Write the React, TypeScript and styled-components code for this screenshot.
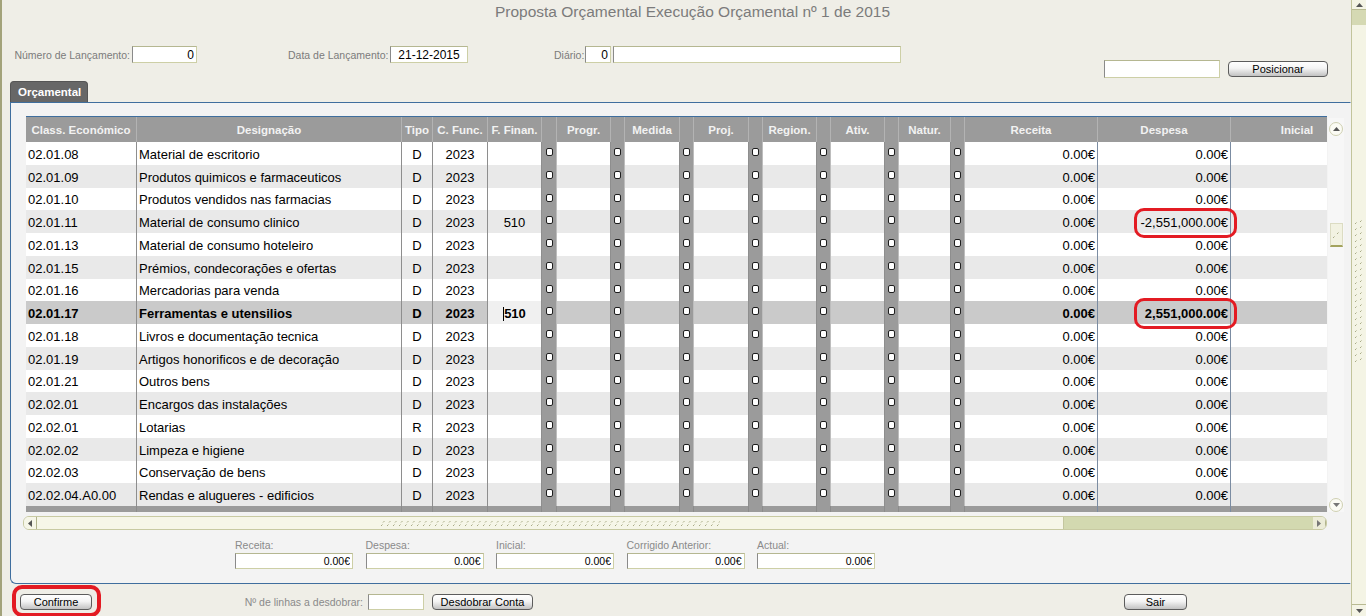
import React from "react";
import styled, { createGlobalStyle } from "styled-components";

const GlobalStyle = createGlobalStyle`
  html, body { margin: 0; padding: 0; background: #efeee7; }
  body { font-family: "Liberation Sans", Arial, sans-serif; }
  * { box-sizing: border-box; }
`;

type Kind = "text" | "check" | "money";
type Align = "left" | "center" | "right";
interface Col { key: string; label: string; w: number; kind: Kind; align: Align; }

const COLS: Col[] = [
  { key: "cls", label: "Class. Económico", w: 111, kind: "text", align: "left" },
  { key: "des", label: "Designação", w: 265, kind: "text", align: "left" },
  { key: "tipo", label: "Tipo", w: 31, kind: "text", align: "center" },
  { key: "cf", label: "C. Func.", w: 55, kind: "text", align: "center" },
  { key: "ff", label: "F. Finan.", w: 54, kind: "text", align: "center" },
  { key: "c1", label: "", w: 15, kind: "check", align: "center" },
  { key: "progr", label: "Progr.", w: 54, kind: "text", align: "center" },
  { key: "c2", label: "", w: 14, kind: "check", align: "center" },
  { key: "medida", label: "Medida", w: 55, kind: "text", align: "center" },
  { key: "c3", label: "", w: 14, kind: "check", align: "center" },
  { key: "proj", label: "Proj.", w: 55, kind: "text", align: "center" },
  { key: "c4", label: "", w: 14, kind: "check", align: "center" },
  { key: "region", label: "Region.", w: 54, kind: "text", align: "center" },
  { key: "c5", label: "", w: 14, kind: "check", align: "center" },
  { key: "ativ", label: "Ativ.", w: 54, kind: "text", align: "center" },
  { key: "c6", label: "", w: 14, kind: "check", align: "center" },
  { key: "natur", label: "Natur.", w: 52, kind: "text", align: "center" },
  { key: "c7", label: "", w: 14, kind: "check", align: "center" },
  { key: "receita", label: "Receita", w: 133, kind: "money", align: "right" },
  { key: "despesa", label: "Despesa", w: 133, kind: "money", align: "right" },
  { key: "inicial", label: "Inicial", w: 133, kind: "money", align: "right" },
];

const TEMPLATE = COLS.map((c) => `${c.w}px`).join(" ");

interface RowData {
  cls: string; des: string; tipo: string; ff?: string; despesa?: string; ring?: boolean; sel?: boolean;
}

const ROWS: RowData[] = [
  { cls: "02.01.08", des: "Material de escritorio", tipo: "D" },
  { cls: "02.01.09", des: "Produtos quimicos e farmaceuticos", tipo: "D" },
  { cls: "02.01.10", des: "Produtos vendidos nas farmacias", tipo: "D" },
  { cls: "02.01.11", des: "Material de consumo clinico", tipo: "D", ff: "510", despesa: "-2,551,000.00€", ring: true },
  { cls: "02.01.13", des: "Material de consumo hoteleiro", tipo: "D" },
  { cls: "02.01.15", des: "Prémios, condecorações e ofertas", tipo: "D" },
  { cls: "02.01.16", des: "Mercadorias para venda", tipo: "D" },
  { cls: "02.01.17", des: "Ferramentas e utensilios", tipo: "D", ff: "510", despesa: "2,551,000.00€", ring: true, sel: true },
  { cls: "02.01.18", des: "Livros e documentação tecnica", tipo: "D" },
  { cls: "02.01.19", des: "Artigos honorificos e de decoração", tipo: "D" },
  { cls: "02.01.21", des: "Outros bens", tipo: "D" },
  { cls: "02.02.01", des: "Encargos das instalações", tipo: "D" },
  { cls: "02.02.01", des: "Lotarias", tipo: "R" },
  { cls: "02.02.02", des: "Limpeza e higiene", tipo: "D" },
  { cls: "02.02.03", des: "Conservação de bens", tipo: "D" },
  { cls: "02.02.04.A0.00", des: "Rendas e alugueres - edificios", tipo: "D" },
];

/* ---------- page frame ---------- */
const Page = styled.div`
  width: 1366px;
  height: 616px;
  overflow: hidden;
  display: grid;
  grid-template-columns: 1351px 15px;
  background: #efeee7;
`;

const Main = styled.div`
  border-left: 2px solid #a3a37b;
  display: flex;
  flex-direction: column;
  min-width: 0;
`;

const Title = styled.h1`
  margin: 0;
  padding-left: 32px;
  height: 24px;
  line-height: 24px;
  font-size: 15.5px;
  font-weight: normal;
  color: #7b7b7b;
  text-align: center;
`;

/* ---------- header fields ---------- */
const HeaderRow = styled.div`
  display: flex;
  justify-content: space-between;
  align-items: flex-start;
  margin-top: 22px;
  padding: 0 23px 0 12px;
  height: 32px;
`;

const FieldLine = styled.div`
  display: flex;
  align-items: center;
  height: 17px;
`;

const FieldGroup = styled.div<{ $offset: number }>`
  display: flex;
  align-items: center;
  gap: 2px;
  margin-left: ${(p) => p.$offset}px;
`;

const FieldLabel = styled.label<{ $w: number }>`
  width: ${(p) => p.$w}px;
  text-align: right;
  font-size: 10.5px;
  color: #7b7b7b;
  white-space: nowrap;
`;

const TextBox = styled.input<{ $w: number; $h?: number; $align?: Align; $size?: number }>`
  width: ${(p) => p.$w}px;
  height: ${(p) => p.$h ?? 17}px;
  margin: 0;
  padding: 0 2px;
  background: #ffffff;
  border: 1px solid #cdcfa6;
  border-left-color: #8a8a8a;
  border-top-color: #b5b791;
  font-family: "Liberation Sans", Arial, sans-serif;
  font-size: ${(p) => p.$size ?? 12}px;
  color: #000;
  text-align: ${(p) => p.$align ?? "right"};
  outline: none;
`;

const PositionGroup = styled.div`
  display: flex;
  align-items: center;
  gap: 8px;
  margin-top: 14px;
`;

const Btn = styled.button<{ $w: number }>`
  width: ${(p) => p.$w}px;
  height: 16px;
  padding: 0;
  border: 1px solid #5c5c5c;
  border-radius: 4px;
  background: linear-gradient(#ffffff 0%, #f4f4f4 45%, #c2c2c2 100%);
  font-family: "Liberation Sans", Arial, sans-serif;
  font-size: 11px;
  line-height: 14px;
  color: #000;
`;

/* ---------- tab & panel ---------- */
const TabStrip = styled.div`
  display: flex;
  margin-top: 3px;
  padding-left: 8px;
  height: 21px;
`;

const Tab = styled.div`
  width: 78px;
  height: 21px;
  padding-left: 7px;
  background: #676767;
  border: 1px solid #555555;
  border-bottom: none;
  border-radius: 4px 4px 0 0;
  color: #ffffff;
  font-weight: bold;
  font-size: 11.5px;
  line-height: 20px;
`;

const Panel = styled.section`
  margin-left: 8px;
  height: 482px;
  border: 1px solid #3f6e9e;
  border-right-color: #f3f3f3;
  border-radius: 0 0 0 6px;
  background: #f3f3f3;
  padding: 13px 0 0 12px;
  display: flex;
  flex-direction: column;
`;

const GridTop = styled.div`
  display: flex;
  align-items: flex-start;
  gap: 1px;
  padding-left: 3px;
`;

const TableWrap = styled.div`
  flex: none;
  width: 1301px;
  overflow: hidden;
  border-top: 1px solid #3f6e9e;
`;

const HeadRow = styled.div`
  display: grid;
  grid-template-columns: ${TEMPLATE};
  height: 25px;
  background: #9b9b9b;
`;

const HeadCell = styled.div`
  display: flex;
  align-items: center;
  justify-content: center;
  border-right: 1px solid #b3b3b3;
  color: #f2f2f2;
  font-weight: bold;
  font-size: 11.5px;
  white-space: nowrap;
  overflow: hidden;
`;

const Row = styled.div<{ $tone: "white" | "alt" | "sel" }>`
  display: grid;
  grid-template-columns: ${TEMPLATE};
  height: 22.75px;
  background: ${(p) => (p.$tone === "sel" ? "#cacaca" : p.$tone === "alt" ? "#e9e9e9" : "#ffffff")};
  font-weight: ${(p) => (p.$tone === "sel" ? "bold" : "normal")};
`;

const Cell = styled.div<{ $align: Align; $money?: boolean; $edit?: boolean }>`
  position: relative;
  display: flex;
  align-items: center;
  justify-content: ${(p) => (p.$align === "left" ? "flex-start" : p.$align === "center" ? "center" : "flex-end")};
  padding: 2px 2px 0;
  border-right: 1px solid ${(p) => (p.$money ? "#7b8ca2" : "#8e8e8e")};
  background: ${(p) => (p.$edit ? "#f0f0f0" : "transparent")};
  font-size: 13px;
  color: #000;
  white-space: nowrap;
  min-width: 0;
`;

const CheckCell = styled.div`
  display: flex;
  justify-content: center;
  align-items: flex-start;
  padding-top: 6px;
  background: #9b9b9b;
  border-right: 1px solid #bdbdbd;
`;

const CheckBox = styled.span`
  display: block;
  width: 7px;
  height: 8px;
  background: #ffffff;
  border: 1px solid #1e1e1e;
  border-radius: 2px;
`;

const Caret = styled.span`
  display: inline-block;
  width: 1px;
  height: 14px;
  background: #000;
`;

const FootRow = styled.div`
  display: grid;
  grid-template-columns: ${TEMPLATE};
  height: 6px;
  background: #9b9b9b;
`;

const FootCell = styled.div<{ $money?: boolean }>`
  border-right: 1px solid ${(p) => (p.$money ? "#7b8ca2" : "#8c8c8c")};
`;

const Ring = styled.span<{ $l: number; $t: number; $r: number; $b: number; $w?: number }>`
  position: absolute;
  left: ${(p) => p.$l}px;
  top: ${(p) => p.$t}px;
  right: ${(p) => p.$r}px;
  bottom: ${(p) => p.$b}px;
  border: ${(p) => p.$w ?? 3.5}px solid #e31b23;
  border-radius: 10px;
  z-index: 5;
  pointer-events: none;
`;

/* ---------- scrollbars ---------- */
const VScroll = styled.div`
  flex: none;
  width: 16px;
  height: 394px;
  margin-top: 2px;
  background: #f7f7f7;
  display: flex;
  flex-direction: column;
  align-items: center;
  padding: 4px 0 0;
`;

const RoundBtn = styled.div`
  width: 14px;
  height: 14px;
  border: 1px solid #cfd0b2;
  border-radius: 7px;
  background: #fbfbf4;
  display: flex;
  align-items: center;
  justify-content: center;
`;

const VThumb = styled.div`
  margin-top: 87px;
  width: 13px;
  height: 24px;
  background: #f2f2e2;
  border: 1px solid #dcdcc3;
  border-bottom: 2px solid #a3a35e;
  display: flex;
  align-items: center;
  justify-content: center;
`;

const VBottom = styled.div`
  margin-top: auto;
`;

const HScroll = styled.div`
  display: flex;
  width: 1304px;
  height: 14px;
  margin-top: 4px;
  border: 1px solid #c8caa2;
  border-radius: 6px;
  overflow: hidden;
`;

const HArrow = styled.div<{ $bg: string }>`
  flex: none;
  width: 13px;
  display: flex;
  align-items: center;
  justify-content: center;
  background: ${(p) => p.$bg};
  border-right: 1px solid #b1b38c;
`;

const HThumb = styled.div`
  flex: none;
  width: 1026px;
  background: #f6f6e8;
  display: flex;
  align-items: center;
  justify-content: center;
`;

const HTrack = styled.div`
  flex: 1;
  background: #d3d9b0;
  border-left: 1px solid #c3c69e;
`;

const PageScroll = styled.div`
  border-left: 1px solid #c2c49b;
  background: #f4f4e5;
  display: flex;
  flex-direction: column;
`;

const PArrow = styled.div<{ $h: number }>`
  height: ${(p) => p.$h}px;
  display: flex;
  align-items: center;
  justify-content: center;
  border-bottom: 1px solid #b8ba92;
`;

const PArrowBottom = styled(PArrow)`
  border-bottom: none;
  border-top: 1px solid #b8ba92;
`;

const PTrack = styled.div`
  height: 15px;
  background: #d5d9b3;
`;

const PThumb = styled.div`
  flex: 1;
  display: flex;
  justify-content: center;
  padding-top: 195px;
`;

/* ---------- totals ---------- */
const Totals = styled.div`
  display: flex;
  gap: 12.5px;
  margin-top: 9px;
  margin-left: 212px;
`;

const TotalField = styled.div`
  display: flex;
  flex-direction: column;
  width: 118px;
`;

const TotalLabel = styled.span`
  height: 12px;
  line-height: 12px;
  font-size: 10.5px;
  color: #8a8a8a;
  white-space: nowrap;
`;

const TotalBox = styled(TextBox)`
  margin-top: 2px;
`;

/* ---------- bottom bar ---------- */
const BottomBar = styled.div`
  display: flex;
  align-items: flex-start;
  height: 32px;
  padding: 10px 0 0 18px;
`;

const RingWrap = styled.div`
  position: relative;
  display: flex;
`;

const SplitGroup = styled.div`
  display: flex;
  align-items: center;
  margin-left: 149px;
  margin-top: -1px;
`;

const SplitLabel = styled.span`
  width: 122px;
  text-align: right;
  margin-right: 5px;
  font-size: 10.5px;
  color: #8a8a8a;
  white-space: nowrap;
`;

const SplitBtnWrap = styled.div`
  margin-left: 8px;
  margin-top: 1px;
  display: flex;
`;

const ExitWrap = styled.div`
  margin-left: 591px;
  display: flex;
`;

/* ---------- drawings ---------- */
const Tri = ({ dir, color = "#555" }: { dir: "up" | "down" | "left" | "right"; color?: string }) => {
  const d =
    dir === "up" ? "M0 4 L3.5 0 L7 4 Z" :
    dir === "down" ? "M0 0 L7 0 L3.5 4 Z" :
    dir === "left" ? "M4 0 L4 7 L0 3.5 Z" : "M0 0 L4 3.5 L0 7 Z";
  const w = dir === "up" || dir === "down" ? 7 : 4;
  const h = dir === "up" || dir === "down" ? 4 : 7;
  return (
    <svg width={w} height={h} viewBox={`0 0 ${w} ${h}`}>
      <path d={d} fill={color} />
    </svg>
  );
};

const HGrip = () => (
  <svg width="340" height="8" viewBox="0 0 340 8">
    {Array.from({ length: 57 }).map((_, i) => (
      <g key={i} stroke="#a9ab86" strokeWidth="1">
        <line x1={i * 6 + 1} y1={7} x2={i * 6 + 2.5} y2={5.5} />
        <line x1={i * 6 + 3} y1={3.5} x2={i * 6 + 4.5} y2={2} />
      </g>
    ))}
  </svg>
);

const VGrip = () => (
  <svg width="10" height="143" viewBox="0 0 10 143">
    {Array.from({ length: 24 }).map((_, i) => (
      <g key={i} stroke="#a9ab86" strokeWidth="1">
        <line x1={1} y1={i * 6 + 4} x2={2.5} y2={i * 6 + 2.5} />
        <line x1={6} y1={i * 6 + 2} x2={7.5} y2={i * 6 + 0.5} />
      </g>
    ))}
  </svg>
);

const SmallGrip = () => (
  <svg width="8" height="8" viewBox="0 0 8 8">
    <g stroke="#a9ab86" strokeWidth="1">
      <line x1="1" y1="7" x2="2.5" y2="5.5" />
      <line x1="5" y1="3" x2="6.5" y2="1.5" />
    </g>
  </svg>
);

/* ---------- table ---------- */
const DataRow = ({ row, index }: { row: RowData; index: number }) => {
  const tone = row.sel ? "sel" : index % 2 === 1 ? "alt" : "white";
  return (
    <Row $tone={tone}>
      {COLS.map((c) => {
        if (c.kind === "check") {
          return (
            <CheckCell key={c.key}>
              <CheckBox />
            </CheckCell>
          );
        }
        let content: React.ReactNode = null;
        switch (c.key) {
          case "cls": content = row.cls; break;
          case "des": content = row.des; break;
          case "tipo": content = row.tipo; break;
          case "cf": content = "2023"; break;
          case "ff":
            content = row.sel ? (<><Caret />{row.ff}</>) : row.ff ?? "";
            break;
          case "receita": content = "0.00€"; break;
          case "despesa":
            content = (
              <>
                {row.despesa ?? "0.00€"}
                {row.ring && <Ring $l={36} $t={row.sel ? -3 : -2} $r={-7} $b={-5} />}
              </>
            );
            break;
          default: content = "";
        }
        return (
          <Cell key={c.key} $align={c.align} $money={c.kind === "money"} $edit={row.sel && c.key === "ff"}>
            {content}
          </Cell>
        );
      })}
    </Row>
  );
};

const TOTALS = ["Receita:", "Despesa:", "Inicial:", "Corrigido Anterior:", "Actual:"];

export default function App() {
  return (
    <>
      <GlobalStyle />
      <Page>
        <Main>
          <Title>Proposta Orçamental Execução Orçamental nº 1 de 2015</Title>

          <HeaderRow>
            <FieldLine>
              <FieldGroup $offset={0}>
                <FieldLabel $w={116}>Número de Lançamento:</FieldLabel>
                <TextBox $w={65} readOnly value="0" />
              </FieldGroup>
              <FieldGroup $offset={91}>
                <FieldLabel $w={100}>Data de Lançamento:</FieldLabel>
                <TextBox $w={78} $align="center" readOnly value="21-12-2015" />
              </FieldGroup>
              <FieldGroup $offset={86}>
                <FieldLabel $w={29}>Diário:</FieldLabel>
                <TextBox $w={26} readOnly value="0" />
                <TextBox $w={288} readOnly value="" />
              </FieldGroup>
            </FieldLine>
            <PositionGroup>
              <TextBox $w={116} $h={18} readOnly value="" />
              <Btn $w={100}>Posicionar</Btn>
            </PositionGroup>
          </HeaderRow>

          <TabStrip>
            <Tab>Orçamental</Tab>
          </TabStrip>

          <Panel>
            <GridTop>
              <TableWrap>
                <HeadRow>
                  {COLS.map((c) => (
                    <HeadCell key={c.key}>{c.label}</HeadCell>
                  ))}
                </HeadRow>
                {ROWS.map((r, i) => (
                  <DataRow key={i} row={r} index={i} />
                ))}
                <FootRow>
                  {COLS.map((c) => (
                    <FootCell key={c.key} $money={c.kind === "money"} />
                  ))}
                </FootRow>
              </TableWrap>
              <VScroll>
                <RoundBtn><Tri dir="up" /></RoundBtn>
                <VThumb><SmallGrip /></VThumb>
                <VBottom>
                  <RoundBtn><Tri dir="down" color="#777" /></RoundBtn>
                </VBottom>
              </VScroll>
            </GridTop>

            <HScroll>
              <HArrow $bg="#f6f6e8"><Tri dir="left" /></HArrow>
              <HThumb><HGrip /></HThumb>
              <HTrack />
              <HArrow $bg="#ececd8"><Tri dir="right" color="#777" /></HArrow>
            </HScroll>

            <Totals>
              {TOTALS.map((t) => (
                <TotalField key={t}>
                  <TotalLabel>{t}</TotalLabel>
                  <TotalBox $w={118} $h={16} $size={10.5} readOnly value="0.00€" />
                </TotalField>
              ))}
            </Totals>
          </Panel>

          <BottomBar>
            <RingWrap>
              <Btn $w={72}>Confirme</Btn>
              <Ring $l={-8} $t={-9} $r={-9} $b={-7} $w={4} />
            </RingWrap>
            <SplitGroup>
              <SplitLabel>Nº de linhas a desdobrar:</SplitLabel>
              <TextBox $w={56} $h={16} readOnly value="" />
              <SplitBtnWrap>
                <Btn $w={101}>Desdobrar Conta</Btn>
              </SplitBtnWrap>
            </SplitGroup>
            <ExitWrap>
              <Btn $w={63}>Sair</Btn>
            </ExitWrap>
          </BottomBar>
        </Main>

        <PageScroll>
          <PArrow $h={10}><Tri dir="up" /></PArrow>
          <PTrack />
          <PThumb><VGrip /></PThumb>
          <PArrowBottom $h={12}><Tri dir="down" /></PArrowBottom>
        </PageScroll>
      </Page>
    </>
  );
}
